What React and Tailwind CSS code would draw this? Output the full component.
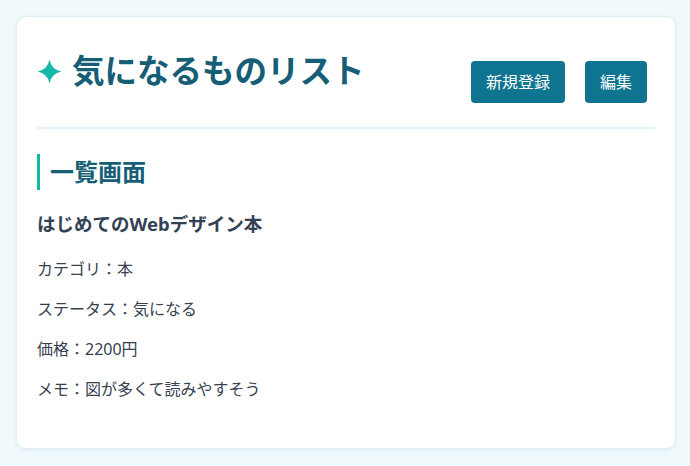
import React from "react";

const item = {
  title: "はじめてのWebデザイン本",
  rows: [
    "カテゴリ：本",
    "ステータス：気になる",
    "価格：2200円",
    "メモ：図が多くて読みやすそう",
  ],
};

function Sparkle() {
  return (
    <svg width="25" height="25" viewBox="0 0 24 24" className="shrink-0">
      <path
        d="M12 0.5 Q13.8 10.2 23.5 12 Q13.8 13.8 12 23.5 Q10.2 13.8 0.5 12 Q10.2 10.2 12 0.5 Z"
        fill="#14b8a6"
      />
    </svg>
  );
}

export default function App() {
  return (
    <div
      className="min-h-[466px] bg-[#f0f9fb] pt-4 pb-4 pl-4 pr-[14px]"
      style={{ fontFamily: '"Noto Sans", "Noto Sans CJK JP", sans-serif' }}
    >
      <div className="bg-white border border-[#dcf0f5] rounded-[10px] shadow-[0_1px_4px_rgba(14,116,144,0.08)] px-5 pt-5 pb-[31px]">
        <header className="flex justify-between items-start border-b-2 border-[#e0f3f8] pb-6">
          <h1 className="mt-[10px] flex items-center gap-[10px] text-[32.5px] leading-[48px] font-bold text-[#155e75]">
            <Sparkle />
            気になるものリスト
          </h1>
          <div className="mt-6 mr-2 flex gap-5">
            <button className="h-[42px] px-[15px] rounded-[4px] bg-[#0e7490] text-white text-base">
              新規登録
            </button>
            <button className="h-[42px] px-[15px] rounded-[4px] bg-[#0e7490] text-white text-base">
              編集
            </button>
          </div>
        </header>

        <section className="mt-[25px]">
          <h2 className="border-l-[3px] border-[#14b8a6] pl-[10px] text-2xl leading-9 font-bold text-[#155e75]">
            一覧画面
          </h2>
          <h3 className="mt-5 mb-5 text-[18.5px] leading-[27px] font-bold text-[#334155]">
            {item.title}
          </h3>
          {item.rows.map((row, index) => (
            <p key={index} className="mb-4 text-base leading-6 text-[#374151]">
              {row}
            </p>
          ))}
        </section>
      </div>
    </div>
  );
}
